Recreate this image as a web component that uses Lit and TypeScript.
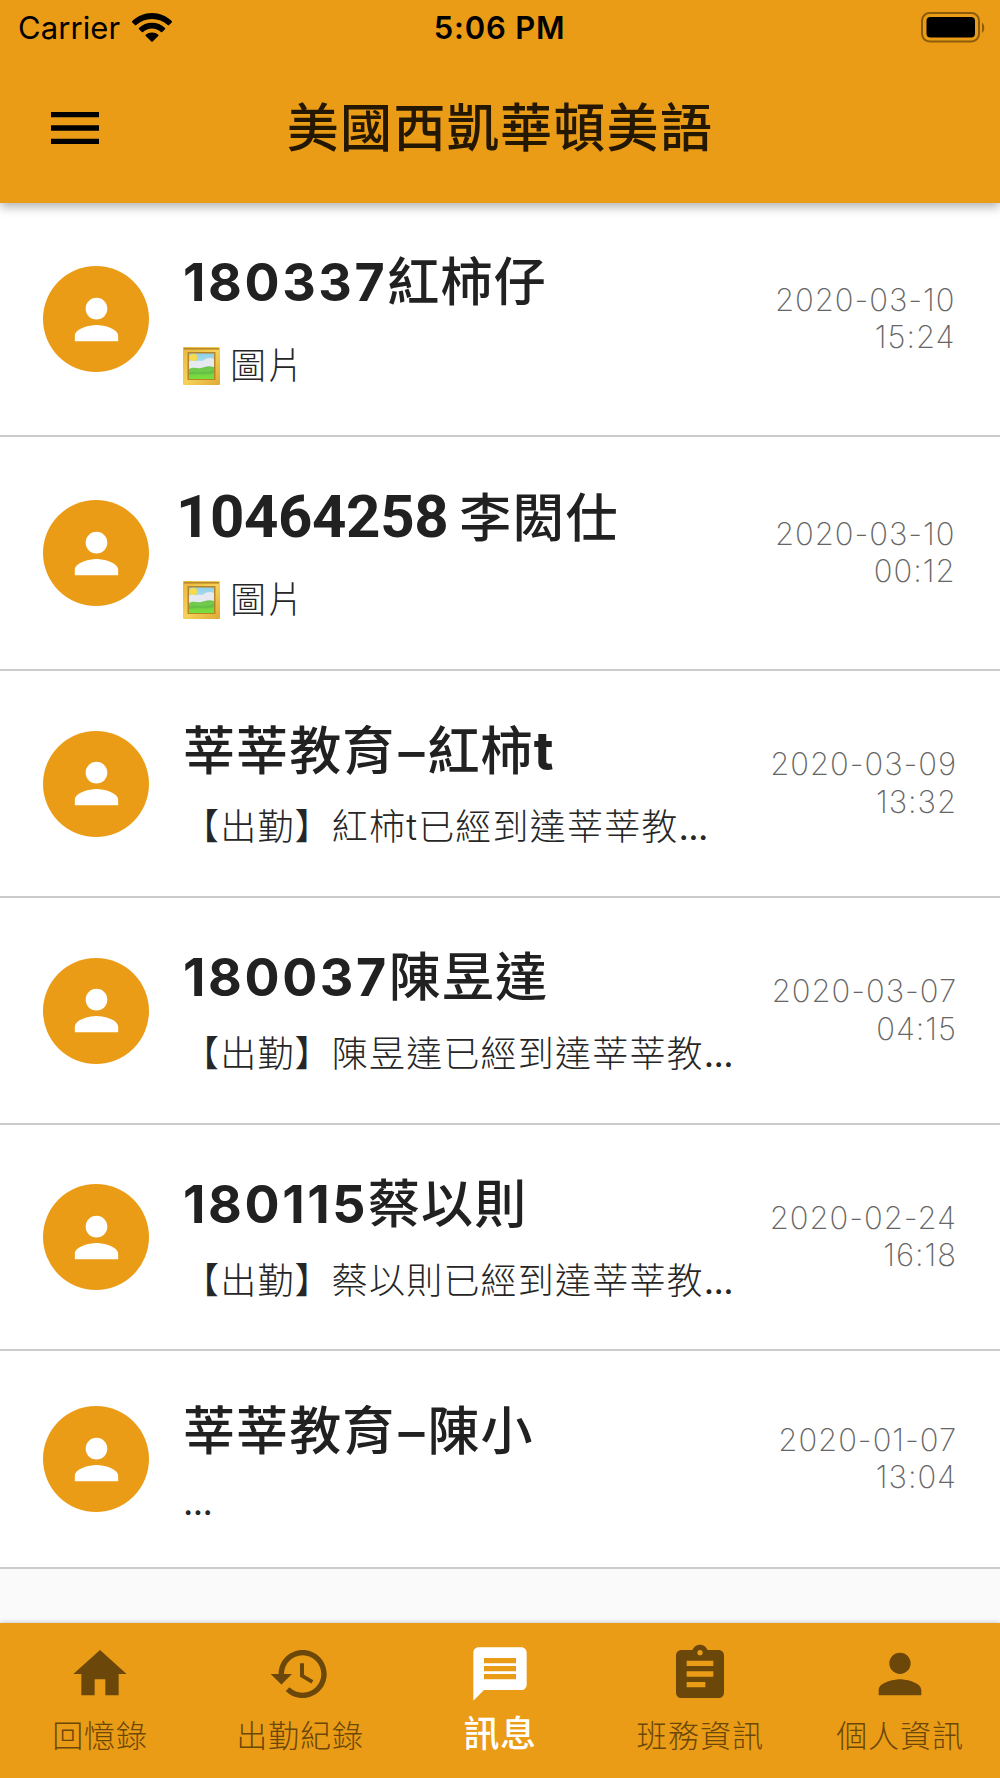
import { LitElement, html, svg, css, nothing } from "lit";
import { customElement, property } from "lit/decorators.js";
import { classMap } from "lit/directives/class-map.js";

const icons = {
  menu: svg`<path d="M3 18h18v-2H3v2zm0-5h18v-2H3v2zm0-7v2h18V6H3z"/>`,
  person: svg`<path d="M12 12c2.21 0 4-1.79 4-4s-1.79-4-4-4-4 1.79-4 4 1.79 4 4 4zm0 2c-2.67 0-8 1.34-8 4v2h16v-2c0-2.66-5.33-4-8-4z"/>`,
  home: svg`<path d="M10 20v-6h4v6h5v-8h3L12 3 2 12h3v8z"/>`,
  history: svg`<path d="M13 3c-4.97 0-9 4.03-9 9H1l3.89 3.89.07.14L9 12H6c0-3.87 3.13-7 7-7s7 3.13 7 7-3.13 7-7 7c-1.93 0-3.68-.79-4.94-2.06l-1.42 1.42C8.27 19.99 10.51 21 13 21c4.97 0 9-4.03 9-9s-4.03-9-9-9zm-1 5v5l4.28 2.54.72-1.21-3.5-2.08V8H12z"/>`,
  chat: svg`<path d="M20 2H4c-1.1 0-1.99.9-1.99 2L2 22l4-4h14c1.1 0 2-.9 2-2V4c0-1.1-.9-2-2-2zm-2 12H6v-2h12v2zm0-3H6V9h12v2zm0-3H6V6h12v2z"/>`,
  assignment: svg`<path d="M19 3h-4.18C14.4 1.84 13.3 1 12 1c-1.3 0-2.4.84-2.82 2H5c-1.1 0-2 .9-2 2v14c0 1.1.9 2 2 2h14c1.1 0 2-.9 2-2V5c0-1.1-.9-2-2-2zm-7 0c.55 0 1 .45 1 1s-.45 1-1 1-1-.45-1-1 .45-1 1-1zm2 14H7v-2h7v2zm3-4H7v-2h10v2zm0-4H7V7h10v2z"/>`,
};
type IconName = keyof typeof icons;

@customElement("app-icon")
class AppIcon extends LitElement {
  @property() name: IconName = "person";
  static styles = css`
    :host { display: block; width: 64px; height: 64px; }
    .glyph { display: block; width: 100%; height: 100%; fill: currentColor; }
  `;
  render() {
    return html`<svg class="glyph" viewBox="0 0 24 24">${icons[this.name]}</svg>`;
  }
}

interface Message {
  id?: string;
  org?: string;
  name: string;
  tail?: string;
  text: string;
  photo?: boolean;
  condensed?: boolean;
  date: string;
  time: string;
}

@customElement("message-row")
class MessageRow extends LitElement {
  @property({ attribute: false }) message!: Message;
  static styles = css`
    :host { display: block; }
    :host(:nth-child(5)) .row { height: 226px; }
    .row {
      box-sizing: border-box; height: 227px; display: flex; align-items: center;
      padding: 0 43px; background: #fff; border-bottom: 2px solid #cbcbcb;
    }
    .row.tall { height: 234px; }
    .row.short { height: 218px; }
    .avatar {
      width: 106px; height: 106px; border-radius: 50%; background: #eb9c16; color: #fff;
      display: grid; place-items: center; flex: none;
    }
    .avatar app-icon { width: 65px; height: 65px; }
    .body { flex: none; width: 560px; margin-left: 34px; padding-top: 1px; display: flex; flex-direction: column; }
    .name {
      font-size: 52px; line-height: 68px; font-weight: 500; letter-spacing: 1.1px;
      color: #212121; white-space: nowrap; display: flex; align-items: baseline; height: 68px;
    }
    .id { font-family: Inter, sans-serif; font-weight: 650; letter-spacing: 2.6px; font-feature-settings: "calt" 0; }
    .id.condensed { font-family: Roboto, sans-serif; font-size: 60px; font-weight: 700; letter-spacing: -0.4px; margin: 0 11px 0 -7px; }
    .tail { font-family: Inter, sans-serif; font-weight: 700; font-size: 54px; }
    .dash { margin: 0 2px 0 3px; font-weight: 500; }
    .text {
      font-size: 36px; line-height: 48px; height: 48px; font-weight: 300; letter-spacing: 1.2px; color: #262626;
      white-space: nowrap; display: flex; align-items: center; margin-top: 18px;
    }
    .tall .text { margin-top: 25px; letter-spacing: 1.6px; }
    .short .body { padding-top: 5px; }
    .short .text { margin-top: 12px; }
    .photo { width: 37px; height: 38px; margin-right: 10px; display: block; }
    .dots { font-weight: 400; letter-spacing: -0.6px; }
    .stamp {
      margin-left: auto; padding-bottom: 2px; text-align: right; font-size: 31px; line-height: 37.5px; font-weight: 200;
      color: #666; letter-spacing: 0.95px; white-space: nowrap; font-family: Inter, sans-serif;
    }
    .tall .stamp { margin-right: 1.5px; }
  `;
  render() {
    const m = this.message;
    const row = classMap({ row: true, tall: !!m.photo, short: m.text === "" });
    return html`<div class=${row}>
      <div class="avatar"><app-icon name="person"></app-icon></div>
      <div class="body">
        <div class="name">${m.id
          ? html`<span class=${classMap({ id: true, condensed: !!m.condensed })}>${m.id}</span>`
          : nothing}${m.org ? html`<span>${m.org}</span><span class="dash">–</span>` : nothing}<span>${m.name}</span>${m.tail
          ? html`<span class="tail">${m.tail}</span>`
          : nothing}</div>
        <div class="text">${m.photo
          ? html`<svg class="photo" viewBox="0 0 37 38">
              <defs>
                <linearGradient id="f" x2="1" y2="1"><stop stop-color="#e9b63c"/><stop offset=".5" stop-color="#f5d25a"/><stop offset="1" stop-color="#dfa935"/></linearGradient>
                <linearGradient id="s" x2="0" y2="1"><stop stop-color="#8fd0ea"/><stop offset="1" stop-color="#dceef2"/></linearGradient>
                <linearGradient id="g" x2="0" y2="1"><stop stop-color="#6fc155"/><stop offset="1" stop-color="#7be03a"/></linearGradient>
              </defs>
              <rect width="37" height="38" rx="1" fill="url(#f)"/>
              <rect x="1" y="1" width="35" height="1.6" fill="#b98a2a"/>
              <rect x="4.5" y="5" width="28" height="28" fill="#b8842a"/>
              <rect x="6" y="6.5" width="25" height="25.5" fill="url(#s)"/>
              <circle cx="10.5" cy="10.5" r="3.8" fill="#f4dc4e"/>
              <path d="M6 15c3-3 5 0 8-1s4 1 7-1 5-3 10-1v10H6z" fill="#e6eaf0"/>
              <path d="M6 22c5-3 8 0 12-1s7-3 13-1v12H6z" fill="url(#g)"/>
              <path d="M6 25c8-2 14 2 25-2v3c-9 3-16 0-25 2z" fill="#5cb548" opacity=".6"/>
            </svg>`
          : nothing}<span>${m.text}</span>${m.photo ? nothing : html`<span class="dots">...</span>`}</div>
      </div>
      <div class="stamp"><div>${m.date}</div><div>${m.time}</div></div>
    </div>`;
  }
}

const messages: Message[] = [
  { id: "180337", name: "紅柿仔", text: "圖片", photo: true, date: "2020-03-10", time: "15:24" },
  { id: "10464258", name: "李閎仕", text: "圖片", photo: true, condensed: true, date: "2020-03-10", time: "00:12" },
  { org: "莘莘教育", name: "紅柿", tail: "t", text: "【出勤】紅柿t已經到達莘莘教", date: "2020-03-09", time: "13:32" },
  { id: "180037", name: "陳昱達", text: "【出勤】陳昱達已經到達莘莘教", date: "2020-03-07", time: "04:15" },
  { id: "180115", name: "蔡以則", text: "【出勤】蔡以則已經到達莘莘教", date: "2020-02-24", time: "16:18" },
  { org: "莘莘教育", name: "陳小", text: "", date: "2020-01-07", time: "13:04" },
];

const tabs: { icon: IconName; label: string; active?: boolean }[] = [
  { icon: "home", label: "回憶錄" },
  { icon: "history", label: "出勤紀錄" },
  { icon: "chat", label: "訊息", active: true },
  { icon: "assignment", label: "班務資訊" },
  { icon: "person", label: "個人資訊" },
];

@customElement("app-root")
class AppRoot extends LitElement {
  static styles = css`
    :host {
      display: flex; flex-direction: column; width: 100%; height: 1778px; overflow: hidden;
      background: #fafafa; font-family: Inter, "Noto Sans CJK TC", sans-serif;
    }
    .header {
      height: 203px; flex: none; background: #eb9c16; z-index: 1; position: relative;
      box-shadow: 0 4px 10px rgba(0, 0, 0, 0.3); display: flex; flex-direction: column;
    }
    .status {
      height: 54px; flex: none; display: grid; grid-template-columns: 1fr auto 1fr; align-items: center;
      padding: 0 14px 0 18px; font-size: 31px; color: #000;
    }
    .left { display: flex; align-items: center; gap: 12px; letter-spacing: 0.1px; }
    .wifi { width: 40px; height: 29px; display: block; }
    .clock { font-weight: 600; letter-spacing: 0.8px; margin-right: 5px; }
    .battery { width: 65px; height: 31px; justify-self: end; display: block; }
    .bar { height: 148px; display: grid; grid-template-columns: 200px 1fr 200px; align-items: center; }
    .menu { margin-left: 42.5px; }
    .title {
      font-size: 52px; line-height: 68px; font-weight: 500; letter-spacing: 1.3px; text-align: center;
      color: #241803; white-space: nowrap; padding-top: 2px;
    }
    .list { flex: 1; display: flex; flex-direction: column; }
    .nav {
      height: 155px; flex: none; background: #eb9c16; display: grid; grid-template-columns: repeat(5, 1fr);
      box-shadow: 0 0 5px rgba(0, 0, 0, 0.25); position: relative;
    }
    .tab { display: flex; flex-direction: column; align-items: center; padding-top: 19px; color: #6b4809; }
    .tab.active { color: #fff; }
    .label { font-size: 31px; line-height: 40px; margin-top: 10px; font-weight: 300; letter-spacing: 0.9px; white-space: nowrap; }
    .active .label { font-size: 36px; font-weight: 500; margin-top: 8px; letter-spacing: 0.5px; }
  `;
  render() {
    return html`
      <header class="header">
        <div class="status">
          <div class="left">
            <span>Carrier</span>
            <svg class="wifi" viewBox="0 0 40 29">
              <path d="M20 0C12.4 0 5.400 3 .3 8.100a1 1 0 0 0 0 1.300l2.600 2.700a1 1 0 0 0 1.400 0C8.500 8 14 5.900 20 5.900S31.500 8 35.700 12.100a1 1 0 0 0 1.400 0l2.600-2.700a1 1 0 0 0 0-1.300C34.600 3 27.600 0 20 0z"/>
              <path d="M20 9.800c-5 0-9.500 1.900-13 5.100a1 1 0 0 0 0 1.400l2.800 2.700a1 1 0 0 0 1.300 0c2.400-2.200 5.500-3.400 8.900-3.400s6.500 1.200 8.900 3.400a1 1 0 0 0 1.300 0l2.800-2.700a1 1 0 0 0 0-1.400c-3.500-3.200-8-5.100-13-5.100z"/>
              <path d="M20 19.500c-2.300 0-4.500.8-6.200 2.200a1 1 0 0 0 0 1.400l5.500 5.500a1 1 0 0 0 1.400 0l5.500-5.500a1 1 0 0 0 0-1.400c-1.700-1.400-3.900-2.200-6.200-2.200z"/>
            </svg>
          </div>
          <div class="clock">5:06 PM</div>
          <svg class="battery" viewBox="0 0 65 31">
            <rect x="1" y="1" width="57" height="28.500" rx="7.500" fill="none" stroke="#8c5c0a" stroke-width="2"/>
            <rect x="5.500" y="5" width="48.500" height="20.500" rx="4"/>
            <path d="M61 10.500c3 2 3 8.500 0 10.500z" fill="#8c5c0a"/>
          </svg>
        </div>
        <div class="bar">
          <app-icon class="menu" name="menu"></app-icon>
          <div class="title">美國西凱華頓美語</div>
        </div>
      </header>
      <main class="list">${messages.map((m) => html`<message-row .message=${m}></message-row>`)}</main>
      <nav class="nav">
        ${tabs.map((t) => html`<div class=${classMap({ tab: true, active: !!t.active })}>
          <app-icon name=${t.icon}></app-icon><span class="label">${t.label}</span>
        </div>`)}
      </nav>`;
  }
}
